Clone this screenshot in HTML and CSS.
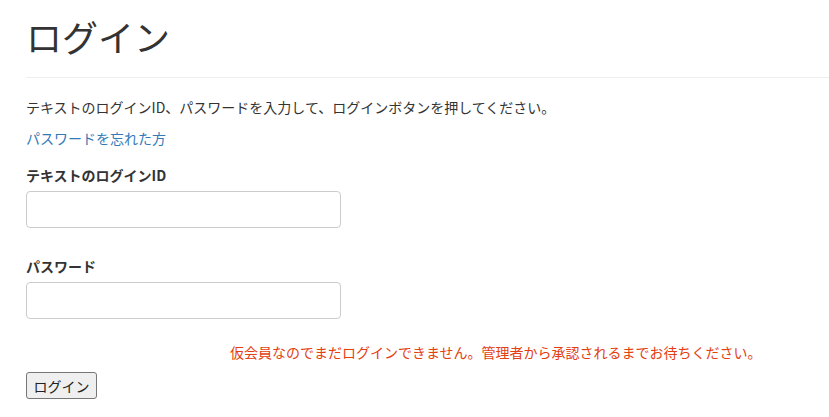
FILE: index.html
```html
<!DOCTYPE html>
<html lang="ja">
<head>
<meta charset="utf-8">
<title>ログイン</title>
<link rel="stylesheet" href="styles.css">
</head>
<body>
<div class="page">
  <h1 class="title">ログイン</h1>
  <hr class="rule">
  <p class="lead">テキストのログインID、パスワードを入力して、ログインボタンを押してください。</p>
  <p class="forgot"><a href="#">パスワードを忘れた方</a></p>
  <form class="form">
    <div class="field">
      <label class="label">テキストのログインID</label>
      <input class="input" type="text">
    </div>
    <div class="field">
      <label class="label">パスワード</label>
      <input class="input" type="password">
    </div>
    <p class="error">仮会員なのでまだログインできません。管理者から承認されるまでお待ちください。</p>
    <button class="btn" type="button">ログイン</button>
  </form>
</div>
</body>
</html>
```
FILE: styles.css
```css
html, body {
  margin: 0;
  padding: 0;
  background: #fff;
}
body {
  font-family: "Noto Sans CJK JP", "Liberation Sans", sans-serif;
  font-size: 14px;
  color: #333;
}
.page {
  padding: 0 0 0 26px;
}
.title {
  font-size: 36px;
  font-weight: 400;
  line-height: 40px;
  margin: 16px 0 0 0;
  color: #333;
}
.rule {
  border: 0;
  border-top: 1px solid #eee;
  margin: 21px 0 0 0;
}
.lead {
  margin: 19px 0 0 0;
  line-height: 20px;
}
.forgot {
  margin: 11px 0 0 0;
  line-height: 20px;
}
.forgot a {
  color: #337ab7;
  text-decoration: none;
}
.form {
  margin-top: 17px;
}
.field {
  margin-bottom: 28px;
}
.label {
  display: block;
  font-weight: 700;
  line-height: 20px;
  margin-bottom: 6px;
}
.input {
  display: block;
  box-sizing: border-box;
  width: 315px;
  height: 37px;
  border: 1px solid #ccc;
  border-radius: 4px;
  padding: 6px 12px;
  font: inherit;
  margin: 0;
}
.error {
  margin: -5px 0 0 204px;
  line-height: 20px;
  color: #e4400f;
}
.btn {
  margin-top: 10px;
  height: 27px;
  width: 71px;
  box-sizing: border-box;
  font: inherit;
  font-size: 14px;
  color: #222;
  background: #efefef;
  border: 1px solid #767676;
  border-radius: 3px;
  padding: 0;
}
```
